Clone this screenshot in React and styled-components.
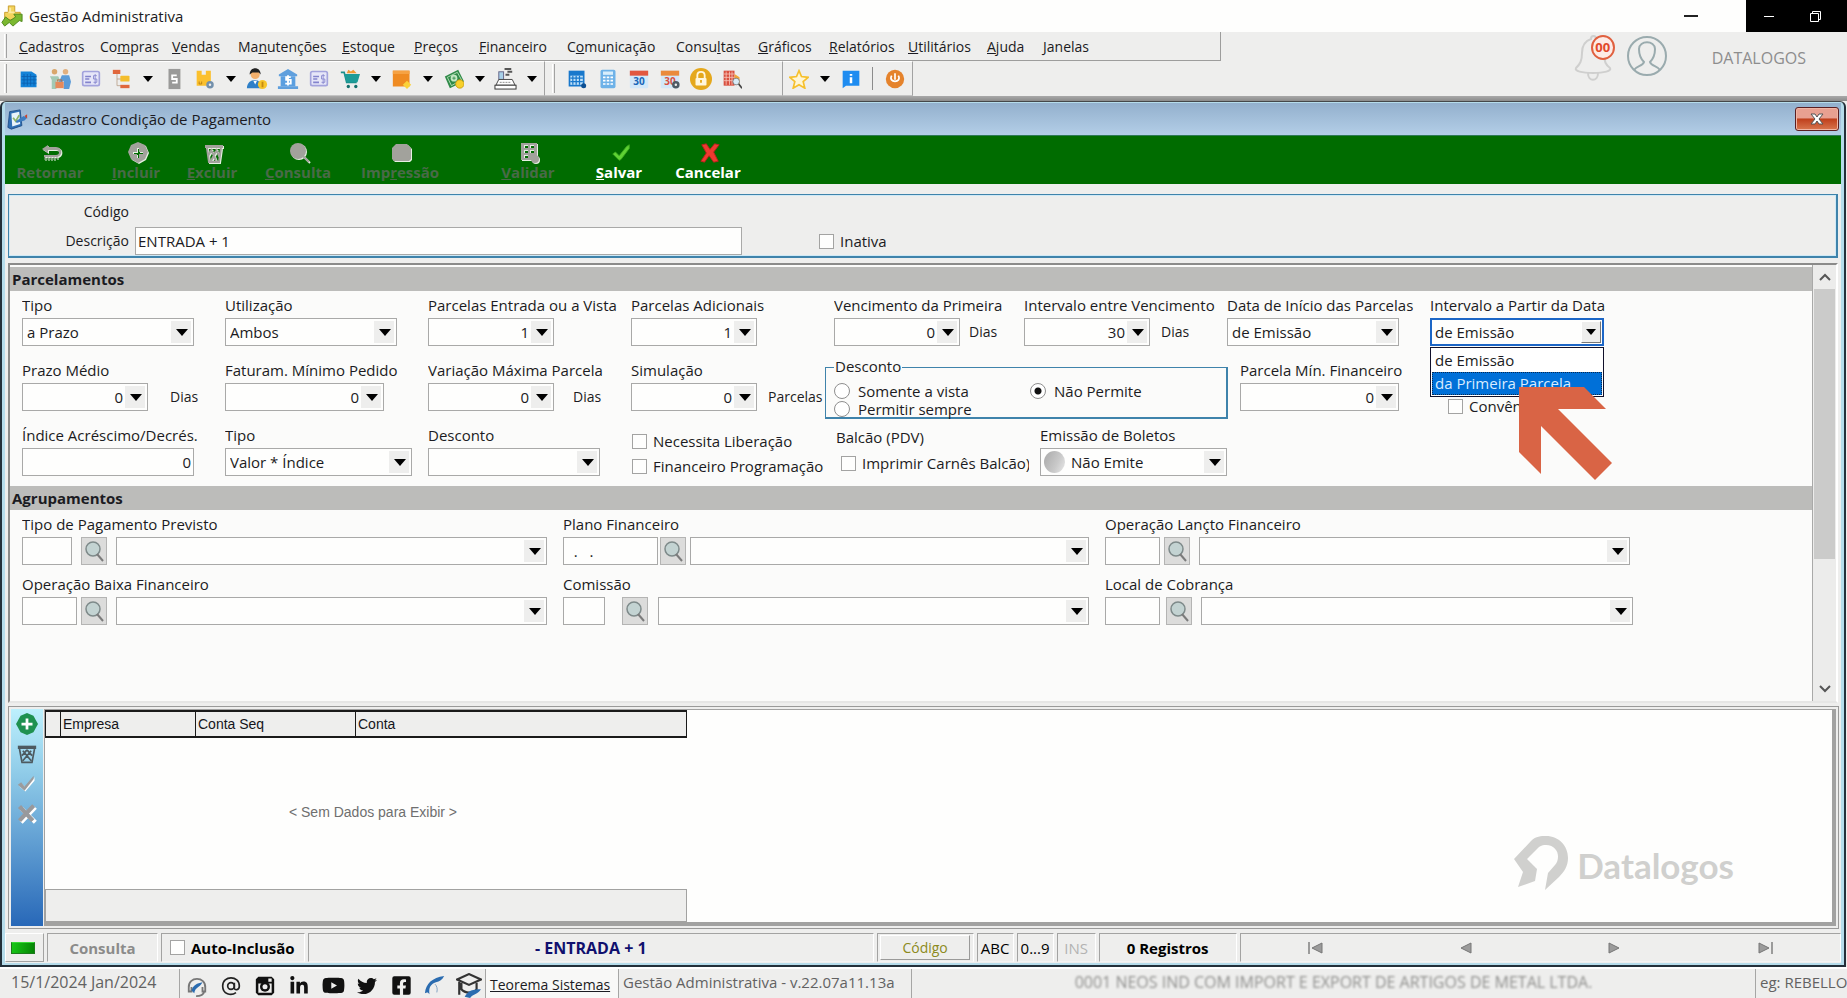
import React, { useState } from "react";
import styled, { createGlobalStyle, css } from "styled-components";
import { FaLinkedinIn, FaTwitter, FaYoutube, FaFacebookSquare } from "react-icons/fa";

const GlobalStyle = createGlobalStyle`
  *, *::before, *::after { box-sizing: border-box; }
  body {
    margin: 0;
    background: #eeeeed;
    color: #1b1b22;
    font: 15px/20px "Open Sans", "Noto Sans", sans-serif;
  }
  button, input, select { font: inherit; color: inherit; }
  button { padding: 0; border: 0; background: none; cursor: pointer; }
`;

/* ---------- page shell ---------- */

const Page = styled.div`
  display: flex;
  flex-direction: column;
  min-height: 100vh;
  overflow: hidden;
`;

const TitleBar = styled.header`
  display: flex;
  align-items: center;
  height: 32px;
  padding-left: 1px;
  background: #fefefd;
`;

const AppTitle = styled.h1`
  flex: 1;
  margin: 0 0 0 6px;
  font-size: 15px;
  font-weight: 400;
`;

const MinimizeButton = styled.button`
  width: 14px;
  height: 20px;
  margin-right: 48px;
  background: linear-gradient(#222, #222) center / 14px 2px no-repeat;
`;

const CaptureControls = styled.div`
  display: flex;
  align-items: center;
  justify-content: space-between;
  width: 101px;
  height: 32px;
  padding: 0 26px 0 18px;
  background: #000;
  button { display: flex; }
`;

const TopArea = styled.div`
  display: flex;
  height: 64px;
`;

const Bars = styled.div`
  flex: 1;
  min-width: 0;
`;

const Grip = styled.span`
  flex: none;
  width: 3px;
  margin: 2px 6px 2px 4px;
  border-left: 1px solid #fff;
  border-right: 1px solid #a2a2a2;
`;

const MenuBar = styled.nav`
  display: flex;
  width: 1221px;
  height: 29px;
  border-right: 1px solid #9d9d9c;
  border-bottom: 1px solid #9d9d9c;
`;

const MenuItem = styled.button`
  flex: none;
  width: ${(p) => p.$w}px;
  padding: 2px 0 0 6px;
  text-align: left;
  font-size: 14px;
  white-space: nowrap;
`;

const ToolRow = styled.div`
  display: flex;
  height: 35px;
`;

const ToolGroup = styled.div`
  display: flex;
  align-items: stretch;
  border-top: 1px solid #fff;
  border-right: 1px solid #a2a2a2;
  border-bottom: 1px solid #c4c4c4;
  padding: 0 ${(p) => p.$end || 0}px 0 ${(p) => p.$start || 0}px;
`;

const ToolButton = styled.button`
  display: flex;
  align-items: center;
  justify-content: center;
  width: 31px;
`;

const CaretButton = styled(ToolButton)`
  width: 21px;
  &::after {
    content: "";
    border: 5px solid transparent;
    border-top: 6px solid #000;
    border-bottom: 0;
  }
`;

const ToolSeparator = styled.span`
  width: 1px;
  margin: 5px 6px;
  background: #8c8c8c;
`;

const Account = styled.div`
  display: flex;
  align-items: flex-start;
  padding: 3px 41px 0 0;
  color: #8d8d8d;
`;

const BellButton = styled.button`
  position: relative;
  display: flex;
  margin-right: 13px;
`;

const Badge = styled.span`
  position: absolute;
  top: 0;
  right: -2px;
  width: 24px;
  height: 25px;
  border: 2px solid #e0603f;
  border-radius: 50%;
  background: #fdebe6;
  color: #e2492a;
  font-size: 13px;
  font-weight: 700;
  line-height: 21px;
  text-align: center;
`;

const AccountName = styled.span`
  margin: 12px 0 0 44px;
  font-size: 16px;
  line-height: 22px;
`;

/* ---------- inner window ---------- */

const Frame = styled.main`
  flex: 1;
  display: flex;
  flex-direction: column;
  margin-right: 1px;
  padding: 1px 3px 2px;
  border: 2px solid #23303a;
  border-top: 1px solid #45484a;
  border-radius: 6px 6px 0 0;
  background: #b5dceb;
`;

const Shelf = styled.div`
  height: 5px;
  background: linear-gradient(#a9a9a9, #8b8b8b);
`;

const WindowTitle = styled.div`
  display: flex;
  align-items: center;
  height: 32px;
  padding: 0 2px 0 2px;
  background: linear-gradient(#93b0cd, #b3cee7);
  h2 {
    flex: 1;
    margin: 0 0 0 6px;
    font-size: 15px;
    font-weight: 400;
  }
`;

const CloseButton = styled.button`
  display: flex;
  align-items: center;
  justify-content: center;
  width: 44px;
  height: 24px;
  border: 1px solid #5b1f22;
  border-radius: 3px;
  box-shadow: inset 0 0 0 1px #f0b5a4;
  background: linear-gradient(#e8a091 0 45%, #bf3f1c 50%, #d9764f);
`;

const ActionBar = styled.div`
  display: flex;
  flex: none;
  height: 49px;
  border-top: 1px solid #2e7a56;
  background: #006c00;
`;

const Action = styled.button`
  display: flex;
  flex-direction: column;
  align-items: center;
  width: ${(p) => p.$w}px;
  margin-left: ${(p) => p.$before || 0}px;
  padding-top: 6px;
  color: #fff;
  font-weight: 700;
  line-height: 16px;
  svg { display: block; margin-left: 4px; }
  &:disabled { color: #496a48; cursor: default; }
`;

const Body = styled.div`
  flex: 1;
  display: flex;
  flex-direction: column;
  background: #eeeeed;
`;

const Identity = styled.section`
  display: grid;
  grid-template-columns: 122px 608px 1fr;
  grid-template-rows: 31px 28px;
  margin: 10px 3px 5px;
  height: 64px;
  padding-top: 1px;
  border: 2px solid #3f83ab;
  border-width: 1px 2px 2px 1px;
  box-shadow: inset 0 0 0 1px #cfe9f6;
  align-items: center;
`;

const SideLabel = styled.label`
  padding-right: 2px;
  text-align: right;
  font-size: 14px;
`;

const controlBox = css`
  height: 28px;
  border: 1px solid #a9a9a8;
  border-radius: 0;
  background: #fefefd;
  outline: 0;
`;

const TextInput = styled.input`
  ${controlBox}
  width: ${(p) => p.$w}px;
  padding: 0 2px;
  text-align: ${(p) => p.$align || "left"};
`;

/* ---------- scrolling form ---------- */

const FormPanel = styled.div`
  display: flex;
  margin: 0 3px;
  border: 2px solid #8b8b8a;
  border-right-color: #fff;
  border-bottom-color: #e6e6e5;
  background: #fbfbfa;
`;

const FormContent = styled.div`
  flex: 1;
  min-width: 0;
  padding: 2px 0 66px;
  border-right: 1px solid #a9a9a8;
`;

const ScrollTrack = styled.div`
  display: flex;
  flex-direction: column;
  align-items: center;
  width: 23px;
  background: #ececeb;
`;

const ScrollButton = styled.button`
  display: flex;
  align-items: center;
  justify-content: center;
  width: 21px;
  height: 24px;
`;

const ScrollThumb = styled.div`
  width: 21px;
  height: 270px;
  margin-bottom: auto;
  background: #cbcbca;
`;

const SectionTitle = styled.h3`
  margin: 0;
  padding-left: 2px;
  background: #bcbcba;
  font-size: 15px;
  line-height: 24px;
`;

const Rows = styled.div`
  display: flex;
  flex-direction: column;
  gap: ${(p) => p.$gap}px;
  padding: 4px 0 10px 12px;
`;

const Row = styled.div`
  display: grid;
  grid-template-columns: ${(p) => p.$cols};
  align-items: start;
  height: 51px;
`;

const FieldBox = styled.div`
  position: relative;
  min-width: 0;
`;

const FieldLabel = styled.label`
  display: block;
  width: ${(p) => (p.$w ? p.$w + "px" : "auto")};
  height: 20px;
  margin-bottom: 3px;
  overflow: hidden;
  white-space: nowrap;
`;

const Line = styled.div`
  display: flex;
  align-items: center;
`;

const Unit = styled.span`
  margin-left: ${(p) => p.$gap}px;
  font-size: 14px;
`;

const Combo = styled.span`
  position: relative;
  display: block;
  width: ${(p) => p.$w}px;
  &::before {
    content: "";
    position: absolute;
    top: 3px;
    right: 3px;
    width: 20px;
    height: 22px;
    background: #eeeeed;
    pointer-events: none;
  }
  &::after {
    content: "";
    position: absolute;
    top: 11px;
    right: 6px;
    border: 6px solid transparent;
    border-top: 7px solid #000;
    border-bottom: 0;
    pointer-events: none;
  }
  ${(p) => p.$open && css`
    &::before {
      border: 1px solid #fff;
      border-right-color: #777;
      border-bottom-color: #777;
    }
    &::after { right: 8px; border-width: 6px 5px 0; }
    select { border: 2px solid #1c66c6; padding-left: 3px; }
  `}
`;

const ComboSelect = styled.select`
  ${controlBox}
  display: block;
  width: 100%;
  appearance: none;
  padding: 0 24px 0 ${(p) => p.$pad || 4}px;
`;

const ComboInput = styled.input`
  ${controlBox}
  display: block;
  width: 100%;
  padding: 0 24px 0 4px;
  text-align: right;
`;

const StatusDot = styled.span`
  position: absolute;
  z-index: 1;
  top: 3px;
  left: 4px;
  width: 21px;
  height: 22px;
  border-radius: 50%;
  background: linear-gradient(115deg, #a9a9a9, #c9c9c9 60%, #e8e8e8);
`;

const OptionList = styled.ul`
  position: absolute;
  z-index: 2;
  top: 52px;
  left: 0;
  width: 174px;
  margin: 0;
  padding: 1px;
  border: 1px solid #10102a;
  background: #fff;
  list-style: none;
`;

const OptionItem = styled.li`
  height: 23px;
  padding-left: 2px;
  border: 1px dotted ${(p) => (p.$active ? "#0a2a50" : "transparent")};
  background: ${(p) => (p.$active ? "#0070d8" : "#fff")};
  color: ${(p) => (p.$active ? "#d9ecff" : "#1b1b22")};
  line-height: 21px;
`;

const Pointer = styled.svg`
  position: absolute;
  z-index: 3;
  top: 92px;
  left: 89px;
`;

const Stack = styled.div`
  display: flex;
  flex-direction: column;
  min-width: 0;
  gap: ${(p) => p.$gap || 0}px;
  padding: ${(p) => p.$top || 0}px 0 0 ${(p) => p.$left || 0}px;
`;

const CheckLabel = styled.label`
  display: flex;
  align-items: center;
  width: ${(p) => (p.$w ? p.$w + "px" : "auto")};
  overflow: hidden;
  white-space: nowrap;
  font-weight: ${(p) => (p.$bold ? 700 : 400)};
`;

const CheckInput = styled.input`
  flex: none;
  appearance: none;
  width: 15px;
  height: 15px;
  margin: 0 6px 0 1px;
  border: 1px solid #a3a3a2;
  background: #fefefd;
  &:checked { background: #0070d8; }
`;

const RadioGroup = styled.fieldset`
  width: 403px;
  height: 62px;
  margin: -3px 0 -8px;
  padding: 0 8px;
  border: 2px solid #3f83ab;
  border-width: 1px 2px 2px 1px;
  legend { padding: 0 1px; height: 20px; line-height: 18px; }
`;

const RadioGrid = styled.div`
  display: grid;
  grid-template-columns: 196px 1fr;
  padding-top: 5px;
`;

const RadioLabel = styled.label`
  display: flex;
  align-items: center;
  height: 18px;
  line-height: 18px;
`;

const RadioInput = styled.input`
  appearance: none;
  width: 16px;
  height: 16px;
  margin: 0 8px 0 0;
  border: 1px solid #8e8e8e;
  border-radius: 50%;
  background: #fff;
  &:checked { background: radial-gradient(circle, #111 0 3px, #fff 4px); }
`;

const SearchButton = styled.button`
  display: flex;
  align-items: center;
  justify-content: center;
  width: 26px;
  height: 28px;
  margin: 0 ${(p) => p.$after}px 0 ${(p) => p.$before}px;
  border: 1px solid #b4b4b3;
  background: #dcdcdb;
`;

/* ---------- accounts grid ---------- */

const GridPanel = styled.section`
  flex: 1;
  display: flex;
  min-height: 220px;
  margin: 3px 2px 3px 3px;
  border: 1px solid #9a9a99;
  padding: 2px;
  gap: 1px;
`;

const SideTools = styled.div`
  display: flex;
  flex-direction: column;
  align-items: center;
  width: 32px;
  background: linear-gradient(#bdf0fd, #8fcbe8 30%, #2868b8);
  button { display: flex; align-items: center; justify-content: center; height: 30px; width: 32px; }
`;

const GridArea = styled.div`
  position: relative;
  flex: 1;
  display: flex;
  flex-direction: column;
  border: 1px solid #a2a2a1;
  border-right: 4px solid #a2a2a1;
  border-bottom: 4px solid #a2a2a1;
  background: #fefefd;
`;

const GridTable = styled.table`
  width: 642px;
  flex: none;
  border-collapse: collapse;
  table-layout: fixed;
  font: 14px/20px "Liberation Sans", Arial, sans-serif;
  color: #15151a;
  th {
    height: 26px;
    padding: 0 2px;
    border: 1px solid #1a1a1a;
    border-width: 2px 1px;
    background: #eeeeed;
    font-weight: 400;
    text-align: left;
  }
  td {
    height: 148px;
    padding: 0 0 0 14px;
    color: #6f6f6f;
    text-align: center;
    vertical-align: middle;
  }
`;

const GridFooter = styled.div`
  width: 642px;
  height: 33px;
  margin-top: auto;
  border: 1px solid #a2a2a1;
  background: #eeeeed;
`;

const Watermark = styled.div`
  position: absolute;
  right: 98px;
  bottom: 32px;
  display: flex;
  align-items: center;
  gap: 9px;
  color: #d0d0ce;
  font: 700 35px/40px Lato, sans-serif;
  span { padding-top: 4px; }
`;

/* ---------- status bars ---------- */

const StatusBar = styled.div`
  display: flex;
  flex: none;
  gap: 3px;
  height: 31px;
  padding-top: 1px;
`;

const Cell = styled.div`
  display: flex;
  align-items: center;
  justify-content: ${(p) => p.$justify || "center"};
  flex: ${(p) => (p.$grow ? `${p.$grow} 1 0` : "none")};
  width: ${(p) => (p.$w ? p.$w + "px" : "auto")};
  min-width: 0;
  height: 29px;
  padding-left: ${(p) => p.$pad || 0}px;
  border: 1px solid #a3a3a2;
  border-right-color: #fff;
  border-bottom-color: #f4f4f3;
  color: ${(p) => p.$color || "#000"};
  font-size: ${(p) => p.$size || 15}px;
  font-weight: ${(p) => (p.$bold ? 700 : 400)};
  white-space: nowrap;
`;

const LedCell = styled(Cell)`
  border-color: #fff #a3a3a2 #a3a3a2 #fff;
  padding-right: 3px;
`;

const Led = styled.span`
  width: 24px;
  height: 12px;
  border: 1px solid #1c7a1c;
  border-top-color: #38d838;
  background: linear-gradient(100deg, #18c818, #048404);
`;

const KeyButton = styled.button`
  width: 90px;
  height: 25px;
  border: 1px solid #fff;
  border-right-color: #9a9a99;
  border-bottom-color: #9a9a99;
  font-size: 14px;
  color: #8c8a20;
`;

const NavCell = styled(Cell)`
  justify-content: space-around;
  button { display: flex; }
`;

const Taskbar = styled.footer`
  display: flex;
  flex: none;
  height: 31px;
  border-top: 2px solid #fff;
  color: #626262;
  line-height: 27px;
  white-space: nowrap;
`;

const TaskCell = styled.div`
  flex: ${(p) => (p.$grow ? "1 1 0" : "none")};
  width: ${(p) => (p.$w ? p.$w + "px" : "auto")};
  padding-left: ${(p) => p.$pad || 0}px;
  border-right: ${(p) => (p.$last ? 0 : 1)}px solid #a6a6a5;
  font-size: ${(p) => p.$size || 15}px;
  overflow: hidden;
`;

const SocialCell = styled(TaskCell)`
  display: flex;
  align-items: center;
  padding-top: 4px;
  a {
    display: flex;
    justify-content: center;
    flex: none;
    width: 34px;
    color: #111;
  }
`;

const SiteLink = styled.a`
  display: block;
  height: 29px;
  padding: 2px 4px 0;
  background: #f8f8f7;
  color: #1b1b22;
  font-size: 14px;
`;

const Censored = styled.span`
  display: block;
  color: #8f8f8d;
  text-align: center;
  font-size: 16px;
  filter: blur(1px);
`;

/* ---------- drawings ---------- */

const Svg = ({ s = 20, children, ...rest }) => (
  <svg width={s} height={s} viewBox="0 0 24 24" fill="none" aria-hidden="true" {...rest}>{children}</svg>
);

const AppIcon = () => (
  <Svg s={22}>
    <path d="M8 1h7v7h6v8H4V8h4z" fill="#f3d35c" stroke="#c79d2a" />
    <path d="M8 8h7M10 3v4M17 10v4" stroke="#fbeaa0" strokeWidth="2" />
    <path d="M1 19l4-6 5 4 6-4-2-3h9v8l-3-1-7 6-4-4-5 4z" fill="#7bb830" stroke="#4b8418" />
  </Svg>
);

const FormIcon = () => (
  <Svg s={21}>
    <path d="M3 3l12-2 2 18-12 4-4-2z" fill="#2f6fb4" stroke="#1f4d86" />
    <path d="M5 5l9-2 1 14-9 3z" fill="#e9f4fb" />
    <path d="M7 10l3 4 4-7" stroke="#8db36a" strokeWidth="2" />
    <path d="M10 14l9-6 4 2-3 3-9 3z" fill="#3d7cc0" />
    <path d="M20 8l3-2v5z" fill="#c8452e" />
  </Svg>
);

const Building = () => (
  <Svg><path d="M2 3h13l6 4v15H2z" fill="#1483d8" />
    <path d="M6 6v14M10 6v14M14 6v14M18 8v12M3 9h18M3 13h18M3 17h18" stroke="#0b5fae" strokeWidth="1" /></Svg>
);
const People = () => (
  <Svg s={22}>
    <circle cx="6" cy="4" r="3" fill="#d9a76c" /><circle cx="18" cy="4" r="3" fill="#e0b080" />
    <path d="M1 9h9l3 6-2 1-3-3v10H3V13z" fill="#a3c9b4" /><path d="M14 8h8l2 7-2 8h-6V14l-4 3-1-2z" fill="#5a9bd8" />
    <rect x="7" y="15" width="9" height="7" fill="#e58a5b" /><path d="M9 15v-2h5v2" stroke="#b56a40" />
  </Svg>
);
const Card = () => (
  <Svg><rect x="2" y="3" width="20" height="17" rx="2" fill="#e6e6f8" stroke="#a3a3dc" strokeWidth="2" />
    <path d="M5 9h7M5 12h5M5 16h7" stroke="#8484cc" strokeWidth="2" />
    <path d="M19 8h-4v4h4v4h-4M17 6v12" stroke="#8484cc" strokeWidth="1" /></Svg>
);
const Tree = () => (
  <Svg><path d="M6 6v14h8M6 12h8" stroke="#b9a08a" />
    <rect x="1" y="1" width="9" height="5" fill="#e0673c" /><rect x="10" y="8" width="11" height="7" rx="1" fill="#f4bd2c" />
    <rect x="10" y="19" width="11" height="4" fill="#e0673c" /></Svg>
);
const Doc = () => (
  <Svg s={22}><path d="M6 1h13v22H6z" fill="#9a9a99" />
    <path d="M15 8h-5v4h5v4h-5" stroke="#fff" strokeWidth="2" /></Svg>
);
const BoxGear = () => (
  <Svg><path d="M2 2h6v5h5V2h6v18H2z" fill="#fbc02d" /><path d="M5 15v3h3v-3" stroke="#b67b10" />
    <circle cx="18" cy="19" r="3" fill="#eee" stroke="#7390ac" strokeWidth="3" /></Svg>
);
const Person = () => (
  <Svg s={22}><circle cx="10" cy="7" r="5" fill="#f4b06c" /><path d="M4 7c0-9 12-9 12 0l-2-2H7z" fill="#222" />
    <path d="M1 22c0-12 17-12 17 0z" fill="#2f80c8" /><path d="M8 14l2 4 2-4z" fill="#fff" />
    <circle cx="18" cy="18" r="5" fill="#f7c52b" /><path d="M18 15v6" stroke="#c68a10" strokeWidth="2" /></Svg>
);
const Bank = () => (
  <Svg s={22}><path d="M2 7l10-6 10 6v2H2zM1 20h22v3H1z" fill="#5f9fdd" /><path d="M4 9h16v11H4z" fill="#5b9fe0" />
    <path d="M15 10h-5v3h5v4h-6M12 8v11" stroke="#fff" strokeWidth="2" /></Svg>
);
const Cart = () => (
  <Svg><path d="M1 4h4l3 12h12" stroke="#1d8f8c" strokeWidth="2" /><path d="M5 6h19l-3 10H8z" fill="#1d9c98" />
    <path d="M8 5l2-4 3 2 3-2 4 4z" fill="#ef9a35" /><circle cx="10" cy="21" r="2" fill="#146f6c" /><circle cx="19" cy="21" r="2" fill="#146f6c" /></Svg>
);
const OrangeBox = () => (
  <Svg><rect x="1" y="2" width="20" height="19" fill="#ef8b22" /><path d="M1 2h20v4H1z" fill="#f6a243" />
    <path d="M18 14l5 5-5 5-5-5z" fill="#fbd23a" /></Svg>
);
const Money = () => (
  <Svg><path d="M1 9l16-8 7 14-17 8z" fill="#2f8a48" /><path d="M4 10l12-6 5 9-12 7z" stroke="#c4e8c4" />
    <circle cx="12" cy="11" r="4" fill="#c4e8c4" /><path d="M10 11h4M12 9v4" stroke="#2f8a48" /><circle cx="19" cy="18" r="5" fill="#f7d02b" stroke="#c69a10" /></Svg>
);
const Register = () => (
  <Svg s={23}><path d="M11 2h7M14 5h5M12 8h4" stroke="#555" strokeWidth="2" />
    <rect x="5" y="5" width="5" height="8" fill="#a8d0e8" stroke="#668" /><path d="M5 13h14l3 6H2z" fill="#fff" stroke="#444" />
    <path d="M6 16h12" stroke="#888" strokeDasharray="2 1" /><rect x="1" y="19" width="22" height="4" fill="#fff" stroke="#333" /></Svg>
);
const BlueCalendar = () => (
  <Svg><path d="M2 2h19v19H2z" fill="#1878cc" /><path d="M4 8h15v11H4z" fill="#bfe0f8" />
    <path d="M7 8v11M11 8v11M15 8v11M4 11h15M4 15h15" stroke="#1878cc" strokeWidth="1.5" /><circle cx="20" cy="20" r="3" fill="#0d4f92" /></Svg>
);
const Calculator = () => (
  <Svg><rect x="3" y="1" width="18" height="22" rx="2" fill="#6eb2e8" /><rect x="6" y="3" width="12" height="4" fill="#d8eefc" />
    <path d="M6 10h12M6 14h12M6 18h12" stroke="#fff" strokeWidth="2" strokeDasharray="3 1.5" /></Svg>
);
const DayCalendar = ({ c = "#e2573f", t = "#1a66b8", gear }) => (
  <Svg><rect x="1" y="2" width="22" height="21" rx="1" fill="#d3e8f9" /><path d="M1 2h22v6H1z" fill={c} />
    <text x="12" y="19" textAnchor="middle" fontSize="12" fontWeight="700" fontFamily="Open Sans, sans-serif" fill={t}>30</text>
    {gear && <circle cx="19" cy="19" r="3" fill="#eee" stroke="#4d5a64" strokeWidth="3" />}</Svg>
);
const Lock = () => (
  <Svg s={22}><circle cx="12" cy="12" r="12" fill="#e5a81c" /><rect x="6" y="11" width="12" height="8" rx="1" fill="#fff6dc" />
    <path d="M8 11V8c0-5 8-5 8 0v3" stroke="#fff6dc" strokeWidth="2" /><path d="M12 13v3" stroke="#e5a81c" strokeWidth="2" /></Svg>
);
const RedBuilding = () => (
  <Svg><rect x="2" y="2" width="13" height="18" fill="#d9503f" /><path d="M5 3v16M9 3v16M12 3v16M2 6h13M2 10h13M2 14h13" stroke="#f6c3b8" />
    <path d="M15 6l6 4v8h-6z" fill="#f0a63a" /><circle cx="17" cy="15" r="4" fill="#d8ecf8" stroke="#777" /><path d="M20 18l4 5" stroke="#444" strokeWidth="2" /></Svg>
);
const Star = () => (
  <Svg><path d="M12 2l3 7 8 1-6 5 2 8-7-4-7 4 2-8-6-5 8-1z" fill="#fff6d4" stroke="#f6c02c" strokeWidth="2" /></Svg>
);
const Info = () => (
  <Svg><path d="M2 2h20v18H6l-4 3z" fill="#1e8cf0" /><path d="M12 6v2M12 10v7" stroke="#fff" strokeWidth="3" /></Svg>
);
const Power = () => (
  <Svg><circle cx="12" cy="12" r="11" fill="#e5832c" /><path d="M8 8c-5 9 13 9 8 0M12 5v8" stroke="#fff" strokeWidth="2" /></Svg>
);

const Bell = () => (
  <svg width="40" height="46" viewBox="0 0 40 46" fill="none" stroke="#cfcfce" strokeWidth="2" aria-hidden="true">
    <path d="M18 4c0-4 5-4 5 0 6 2 8 7 8 14 0 9 2 12 6 15 2 3-6 5-17 5S1 36 3 33c4-4 6-7 6-15 0-8 3-12 9-14z" />
    <path d="M15 38c0 9 10 9 10 0" />
  </svg>
);
const Avatar = () => (
  <svg width="42" height="42" viewBox="0 0 42 42" fill="none" stroke="#9aabae" strokeWidth="2" aria-hidden="true">
    <circle cx="21" cy="21" r="19" />
    <path d="M8 35c2-4 9-4 10-8-4-4-5-8-5-13 0-9 16-9 16 0 0 5-1 9-5 13 1 4 8 4 10 8" />
  </svg>
);

const Emboss = ({ children }) => (
  <svg width="22" height="22" viewBox="0 0 22 22" fill="none" aria-hidden="true">
    <g transform="translate(1 1)" color="#e6f0e2">{children}</g>
    <g color="#a2a29c">{children}</g>
  </svg>
);
const Undo = () => <Emboss><path d="M7 3L1 7l6 4V8h8c4 0 4 5 0 5H3v2h13c6-1 6-10-1-10H7z" fill="currentColor" /><path d="M4 15v3M7 15v3M10 15v3M13 15v3M16 14v3" stroke="currentColor" /></Emboss>;
const PlusSeal = () => <Emboss><path fillRule="evenodd" d="M11 0l7 3 3 7-3 7-7 4-7-4-3-7 3-7zM10 6v4H6v2h4v4h2v-4h4v-2h-4V6z" fill="currentColor" /></Emboss>;
const Bin = () => <Emboss><path d="M2 3h18v3H2z" fill="currentColor" /><path d="M4 6l2 14h10l2-14M8 7l5 12M13 7l4 9M14 7L8 19M9 7l-4 7" stroke="currentColor" strokeWidth="2" /></Emboss>;
const Lens = () => <Emboss><ellipse cx="9" cy="9" rx="8" ry="8" fill="currentColor" /><path d="M14 14l6 6" stroke="currentColor" strokeWidth="2" /></Emboss>;
const Printer = () => <Emboss><path d="M5 2h11l4 4v11l-2 2H3l-2-2V6z" fill="currentColor" /></Emboss>;
const Sheet = () => <Emboss><path fillRule="evenodd" d="M2 1h16v17H2zM5 3v3h4V3zM11 3v3h4V3zM5 8v3h4V8zM11 8v3h4V8zM5 13v3h4v-3z" fill="currentColor" /><circle cx="16" cy="17" r="4" fill="currentColor" /></Emboss>;
const SaveCheck = () => <Svg s={22}><path d="M3 13l3-2 4 4 8-10 3-2v4l-9 12-2 1z" fill="#5fd234" stroke="#3aa81c" /></Svg>;
const CancelX = () => <Svg s={22}><path d="M3 3l5-1 4 6 5-6 5 1-6 8 5 10-5 1-5-7-5 7-4-1 6-9z" fill="#ee3a30" stroke="#b8201c" /></Svg>;

const Magnifier = () => (
  <svg width="20" height="22" viewBox="0 0 20 22" fill="none" aria-hidden="true">
    <circle cx="9" cy="9" r="7" fill="#c3d3d2" stroke="#7e8a8a" strokeWidth="1.5" />
    <path d="M13 14l6 7" stroke="#7b7b7b" strokeWidth="2" />
  </svg>
);
const Chevron = ({ up }) => (
  <svg width="12" height="10" viewBox="0 0 12 10" fill="none" stroke="#555" strokeWidth="2" aria-hidden="true">
    <path d={up ? "M1 8l5-5 5 5" : "M1 2l5 5 5-5"} />
  </svg>
);
const NavArrow = ({ back, edge }) => (
  <svg width="18" height="14" viewBox="0 0 18 14" fill="#9b9b9b" aria-hidden="true">
    <g transform={back ? "matrix(-1 0 0 1 18 0)" : undefined}>
      <path d="M3 2l10 5-10 5z" stroke="#777" />
      {edge && <path d="M15 1h2v12h-2z" />}
    </g>
  </svg>
);
const BrandMark = () => (
  <svg width="54" height="54" viewBox="0 0 54 54" fill="currentColor" aria-hidden="true">
    <path d="M0 23L17 5C22 0 27 0 32 0c13 0 22 10 22 22 0 8-4 14-9 19L31 54l3-17 7-8c6-7 3-20-9-20-5 0-7 2-9 4L13 23l10 10-2 12-17 6 5-15z" />
  </svg>
);
const Bird = () => <Svg s={22}><path d="M1 20C2 9 9 3 22 1c-2 4-5 6-9 7-6 2-8 6-7 13-2-3-3-2-5-1z" fill="#2b6cb0" /><path d="M12 10c2 2 3 5 2 9" stroke="#7a9cc0" /></Svg>;
const Headset = () => <Svg s={22}><path d="M3 14C2 1 22 1 21 14M3 12v6h3v-5M21 12v6h-3v-5M20 18c-1 4-5 5-9 5" stroke="#777" strokeWidth="2" /><path d="M6 17c2-6 6-8 12-9-3 6-8 5-9 12z" fill="#2b6cb0" /></Svg>;
const AtIcon = () => <Svg><circle cx="12" cy="12" r="4" stroke="#222" strokeWidth="2" /><path d="M16 8v6c0 4 6 3 6-2C22-1 2-1 2 12c0 10 10 12 16 8" stroke="#222" strokeWidth="2" /></Svg>;
const Camera = () => <Svg><path fillRule="evenodd" d="M4 1h16l3 3v16l-3 3H4l-3-3V4zM4 9v11h16V9zM16 3v4h4V3z" fill="#111" /><circle cx="12" cy="13" r="6" fill="#111" /><circle cx="12" cy="13" r="3" fill="#eee" /></Svg>;
const Graduate = () => <Svg s={26}><path d="M1 6l11-5 11 5-11 5z" stroke="#333" strokeWidth="2" /><path d="M5 9v6c3 4 12 4 14 0V9M3 8v12" stroke="#333" strokeWidth="2" /><path d="M8 22c3-6 8-7 15-7-3 5-7 4-10 8z" fill="#2b6cb0" /></Svg>;

/* ---------- data ---------- */

const MENUS = [
  ["", "C", "adastros", 81], ["Co", "m", "pras", 72], ["", "V", "endas", 66], ["Ma", "n", "utenções", 104],
  ["", "E", "stoque", 72], ["", "P", "reços", 65], ["", "F", "inanceiro", 88], ["C", "o", "municação", 109],
  ["Consu", "l", "tas", 82], ["", "G", "ráficos", 71], ["", "R", "elatórios", 79], ["", "U", "tilitários", 79],
  ["", "A", "juda", 56], ["", "J", "anelas", 60],
];

const TOOLS = [
  [Building, "Empresas"], [People, "Clientes"], [Card, "Cartões"], [Tree, "Estrutura"], null,
  [Doc, "Documentos"], [BoxGear, "Produtos"], null, [Person, "Vendedores"], [Bank, "Bancos"], [Card, "Cheques"],
  [Cart, "Pedidos"], null, [OrangeBox, "Estoque"], null, [Money, "Financeiro"], null, [Register, "Caixa"], null,
];

const SetupCalendar = () => <DayCalendar c="#ea8a3c" t="#d9503f" gear />;

const TOOLS_2 = [
  [BlueCalendar, "Agenda"], [Calculator, "Calculadora"], [DayCalendar, "Calendário"],
  [SetupCalendar, "Configurar calendário"], [Lock, "Bloquear"], [RedBuilding, "Localizar"],
];

const ACTIONS = [
  ["", "", "Retornar", 90, Undo, true], ["", "I", "ncluir", 82, PlusSeal, true], ["", "E", "xcluir", 70, Bin, true],
  ["", "C", "onsulta", 102, Lens, true], ["Imp", "r", "essão", 102, Printer, true],
  ["", "V", "alidar", 102, Sheet, true, 26], ["", "S", "alvar", 80, SaveCheck, false], ["", "", "Cancelar", 98, CancelX, false],
];

const LOOKUPS = [
  [
    ["Tipo de Pagamento Previsto", 50, 9, 9, 431, ""],
    ["Plano Financeiro", 95, 2, 4, 399, "  .   ."],
    ["Operação Lançto Financeiro", 55, 4, 9, 431, ""],
  ],
  [
    ["Operação Baixa Financeiro", 55, 4, 9, 431, ""],
    ["Comissão", 42, 17, 10, 431, ""],
    ["Local de Cobrança", 55, 6, 9, 432, ""],
  ],
];

/* ---------- composed parts ---------- */

const Mnemonic = ({ parts }) => <span>{parts[0]}{parts[1] && <u>{parts[1]}</u>}{parts[2]}</span>;

const Tools = ({ items }) => items.map((t, i) => {
  if (!t) return <CaretButton key={i} aria-label="Mais opções" />;
  const [Icon, name] = t;
  return <ToolButton key={i} aria-label={name}><Icon /></ToolButton>;
});

const SelectField = ({ id, label, w, value, dot, open, children }) => (
  <FieldBox>
    <FieldLabel htmlFor={id}>{label}</FieldLabel>
    <Combo $w={w} $open={open}>
      {dot && <StatusDot />}
      <ComboSelect id={id} defaultValue={value} $pad={dot ? 30 : 4}><option>{value}</option></ComboSelect>
    </Combo>
    {children}
  </FieldBox>
);

const NumberField = ({ id, label, labelWidth, w, value, unit, gap }) => (
  <FieldBox>
    <FieldLabel htmlFor={id} $w={labelWidth}>{label}</FieldLabel>
    <Line>
      <Combo $w={w}><ComboInput id={id} defaultValue={value} /></Combo>
      {unit && <Unit $gap={gap}>{unit}</Unit>}
    </Line>
  </FieldBox>
);

const Check = ({ children, w, bold }) => (
  <CheckLabel $w={w} $bold={bold}><CheckInput type="checkbox" />{children}</CheckLabel>
);

const Lookup = ({ id, data: [label, iw, before, after, sw, text] }) => (
  <FieldBox>
    <FieldLabel htmlFor={id}>{label}</FieldLabel>
    <Line>
      <TextInput id={id} $w={iw} defaultValue={text} />
      <SearchButton $before={before} $after={after} aria-label={"Pesquisar " + label}><Magnifier /></SearchButton>
      <Combo $w={sw}><ComboSelect aria-label={label} /></Combo>
    </Line>
  </FieldBox>
);

const IntervalOptions = () => {
  const [active, setActive] = useState(1);
  return (
    <OptionList role="listbox" aria-label="Intervalo a Partir da Data">
      {["de Emissão", "da Primeira Parcela"].map((o, i) => (
        <OptionItem key={o} role="option" aria-selected={i === active} $active={i === active} onMouseEnter={() => setActive(i)}>{o}</OptionItem>
      ))}
    </OptionList>
  );
};

export default function App() {
  return (
    <Page>
      <GlobalStyle />
      <TitleBar>
        <AppIcon />
        <AppTitle>Gestão Administrativa</AppTitle>
        <MinimizeButton aria-label="Minimizar" />
        <CaptureControls>
          <button aria-label="Minimizar tela"><svg width="10" height="11"><path d="M0 5h10v1H0z" fill="#fff" /></svg></button>
          <button aria-label="Restaurar tela">
            <svg width="11" height="11" fill="none" stroke="#fff"><path d="M.5 2.500h8v8h-8zM2.500 2.500v-2h8v8h-2" /></svg>
          </button>
        </CaptureControls>
      </TitleBar>

      <TopArea>
        <Bars>
          <MenuBar>
            <Grip />
            {MENUS.map((m) => <MenuItem key={m[1] + m[2]} $w={m[3]}><Mnemonic parts={m} /></MenuItem>)}
          </MenuBar>
          <ToolRow>
            <ToolGroup $end={2}><Grip /><Tools items={TOOLS} /></ToolGroup>
            <ToolGroup $start={3} $end={35}><Grip /><Tools items={TOOLS_2} /></ToolGroup>
            <ToolGroup $end={2}>
              <Tools items={[[Star, "Favoritos"], null, [Info, "Informações"]]} />
              <ToolSeparator />
              <Tools items={[[Power, "Sair"]]} />
            </ToolGroup>
          </ToolRow>
        </Bars>
        <Account>
          <BellButton aria-label="Notificações"><Bell /><Badge>00</Badge></BellButton>
          <Avatar />
          <AccountName>DATALOGOS</AccountName>
        </Account>
      </TopArea>
      <Shelf />

      <Frame>
        <WindowTitle>
          <FormIcon />
          <h2>Cadastro Condição de Pagamento</h2>
          <CloseButton aria-label="Fechar">
            <svg width="14" height="12" viewBox="0 0 14 12"><path d="M1 1h4l2 3 2-3h4L9 6l4 5H9L7 8l-2 3H1l4-5z" fill="#fff" stroke="#555" /></svg>
          </CloseButton>
        </WindowTitle>
        <ActionBar>
          {ACTIONS.map(([a, b, c, w, Icon, off, before]) => (
            <Action key={c} $w={w} $before={before} disabled={off}><Icon /><Mnemonic parts={[a, b, c]} /></Action>
          ))}
        </ActionBar>

        <Body>
          <Identity>
            <SideLabel as="span">Código</SideLabel><span /><span />
            <SideLabel htmlFor="descricao">Descrição</SideLabel>
            <Line><Stack $left={4}><TextInput id="descricao" $w={607} defaultValue="ENTRADA + 1" /></Stack></Line>
            <Stack $left={79}><Check>Inativa</Check></Stack>
          </Identity>

          <FormPanel>
            <FormContent>
              <SectionTitle>Parcelamentos</SectionTitle>
              <Rows $gap={14}>
                <Row $cols="203px 203px 203px 203px 190px 203px 203px 1fr">
                  <SelectField id="tipo" label="Tipo" w={172} value="a Prazo" />
                  <SelectField id="utilizacao" label="Utilização" w={172} value="Ambos" />
                  <NumberField id="entrada" label="Parcelas Entrada ou a Vista" w={126} value="1" />
                  <NumberField id="adicionais" label="Parcelas Adicionais" w={126} value="1" />
                  <NumberField id="vencimento" label="Vencimento da Primeira" w={126} value="0" unit="Dias" gap={9} />
                  <NumberField id="intervalo" label="Intervalo entre Vencimentos" labelWidth={191} w={126} value="30" unit="Dias" gap={11} />
                  <SelectField id="inicio" label="Data de Início das Parcelas" w={172} value="de Emissão" />
                  <SelectField id="partir" label="Intervalo a Partir da Data" w={174} value="de Emissão" open>
                    <IntervalOptions />
                    <Pointer width="94" height="94" viewBox="0 0 94 94" aria-hidden="true">
                      <path d="M0 0h65l22 22H39l54 54-17 17-54-54v48L0 65z" fill="#d96445" />
                    </Pointer>
                  </SelectField>
                </Row>
                <Row $cols="203px 203px 203px 194px 415px 190px 1fr">
                  <NumberField id="prazo" label="Prazo Médio" w={126} value="0" unit="Dias" gap={22} />
                  <NumberField id="faturamento" label="Faturam. Mínimo Pedido" w={159} value="0" />
                  <NumberField id="variacao" label="Variação Máxima Parcela" w={126} value="0" unit="Dias" gap={19} />
                  <NumberField id="simulacao" label="Simulação" w={126} value="0" unit="Parcelas" gap={11} />
                  <RadioGroup>
                    <legend>Desconto</legend>
                    <RadioGrid>
                      <RadioLabel><RadioInput type="radio" name="desconto" />Somente a vista</RadioLabel>
                      <RadioLabel><RadioInput type="radio" name="desconto" defaultChecked />Não Permite</RadioLabel>
                      <RadioLabel><RadioInput type="radio" name="desconto" />Permitir sempre</RadioLabel>
                    </RadioGrid>
                  </RadioGroup>
                  <NumberField id="minimo" label="Parcela Mín. Financeiro" w={159} value="0" />
                  <Stack $top={36} $left={17}><Check>Convênio</Check></Stack>
                </Row>
                <Row $cols="203px 203px 203px 205px 204px 1fr">
                  <FieldBox>
                    <FieldLabel htmlFor="indice">Índice Acréscimo/Decrés.</FieldLabel>
                    <Line><TextInput id="indice" $w={172} $align="right" defaultValue="0" /></Line>
                  </FieldBox>
                  <SelectField id="tipoIndice" label="Tipo" w={187} value="Valor * Índice" />
                  <SelectField id="desc" label="Desconto" w={172} value="" />
                  <Stack $top={6} $gap={5}>
                    <Check>Necessita Liberação</Check>
                    <Check w={196}>Financeiro Programação</Check>
                  </Stack>
                  <Stack $top={2} $gap={6}>
                    <span>Balcão (PDV)</span>
                    <Stack $left={4}><Check w={189}>Imprimir Carnês Balcão)</Check></Stack>
                  </Stack>
                  <SelectField id="boletos" label="Emissão de Boletos" w={187} value="Não Emite" dot />
                </Row>
              </Rows>

              <SectionTitle>Agrupamentos</SectionTitle>
              <Rows $gap={9}>
                {LOOKUPS.map((row, r) => (
                  <Row key={r} $cols="541px 542px 1fr">
                    {row.map((d, c) => <Lookup key={d[0]} id={`lookup-${r}-${c}`} data={d} />)}
                  </Row>
                ))}
              </Rows>
            </FormContent>
            <ScrollTrack>
              <ScrollButton aria-label="Rolar para cima"><Chevron up /></ScrollButton>
              <ScrollThumb />
              <ScrollButton aria-label="Rolar para baixo"><Chevron /></ScrollButton>
            </ScrollTrack>
          </FormPanel>

          <GridPanel>
            <SideTools>
              <button aria-label="Adicionar"><Svg s={22}><path d="M12 0l7 3 5 9-5 9-7 3-7-3-5-9 5-9z" fill="#1f9150" /><path d="M12 6v12M6 12h12" stroke="#fff" strokeWidth="3" /></Svg></button>
              <button aria-label="Remover"><Svg><path d="M1 2h22v4H1z" fill="#4d5a60" /><path d="M3 6l3 16h12l3-16M7 8l10 12M12 7l6 7M17 8L7 20M12 7l-6 7" stroke="#4d5a60" strokeWidth="2" /></Svg></button>
              <button aria-label="Confirmar"><Svg><path d="M3 15l3-3 4 4L21 4v4L10 21z" fill="#fff" /><path d="M1 13l4-3 4 5L20 2v4L9 20z" fill="#9b9c9e" /></Svg></button>
              <button aria-label="Desfazer"><Svg><path d="M5 5l17 17M22 4L5 22" stroke="#fff" strokeWidth="5" /><path d="M3 3l16 17M20 2L3 20" stroke="#98999c" strokeWidth="5" /></Svg></button>
            </SideTools>
            <GridArea>
              <GridTable>
                <colgroup><col width="15" /><col width="135" /><col width="160" /><col /></colgroup>
                <thead><tr><th aria-label="Seleção" /><th>Empresa</th><th>Conta Seq</th><th>Conta</th></tr></thead>
                <tbody><tr><td colSpan="4">&lt; Sem Dados para Exibir &gt;</td></tr></tbody>
              </GridTable>
              <GridFooter />
              <Watermark><BrandMark /><span>Datalogos</span></Watermark>
            </GridArea>
          </GridPanel>

          <StatusBar>
            <LedCell $w={39}><Led /></LedCell>
            <Cell $w={111} $bold $color="#8b8b8a">Consulta</Cell>
            <Cell $w={144} $justify="flex-start" $pad={7}><Check bold>Auto-Inclusão</Check></Cell>
            <Cell $grow={566} $bold $color="#10106e" $size={16}>- ENTRADA + 1</Cell>
            <Cell $w={97}><KeyButton>Código</KeyButton></Cell>
            <Cell $w={37}>ABC</Cell>
            <Cell $w={37}>0...9</Cell>
            <Cell $w={39} $color="#b3b3b2">INS</Cell>
            <Cell $w={138} $bold>0 Registros</Cell>
            <NavCell $grow={602}>
              <button aria-label="Primeiro"><NavArrow back edge /></button>
              <button aria-label="Anterior"><NavArrow back /></button>
              <button aria-label="Próximo"><NavArrow /></button>
              <button aria-label="Último"><NavArrow edge /></button>
            </NavCell>
          </StatusBar>
        </Body>
      </Frame>

      <Taskbar>
        <TaskCell $w={180} $pad={11} $size={16}>15/1/2024 Jan/2024</TaskCell>
        <SocialCell $w={306}>
          <a href="#suporte" aria-label="Suporte"><Headset /></a>
          <a href="#email" aria-label="E-mail"><AtIcon /></a>
          <a href="#instagram" aria-label="Instagram"><Camera /></a>
          <a href="#linkedin" aria-label="LinkedIn"><FaLinkedinIn size={20} /></a>
          <a href="#youtube" aria-label="YouTube"><FaYoutube size={23} /></a>
          <a href="#twitter" aria-label="Twitter"><FaTwitter size={20} /></a>
          <a href="#facebook" aria-label="Facebook"><FaFacebookSquare size={21} /></a>
          <a href="#blog" aria-label="Blog"><Bird /></a>
          <a href="#cursos" aria-label="Cursos"><Graduate /></a>
        </SocialCell>
        <TaskCell $w={133}><SiteLink href="#teorema">Teorema Sistemas</SiteLink></TaskCell>
        <TaskCell $w={293} $pad={4}>Gestão Administrativa - v.22.07a11.13a</TaskCell>
        <TaskCell $grow><Censored>0001 NEOS IND COM IMPORT E EXPORT DE ARTIGOS DE METAL LTDA.</Censored></TaskCell>
        <TaskCell $w={91} $pad={4} $last>eg: REBELLO</TaskCell>
      </Taskbar>
    </Page>
  );
}
